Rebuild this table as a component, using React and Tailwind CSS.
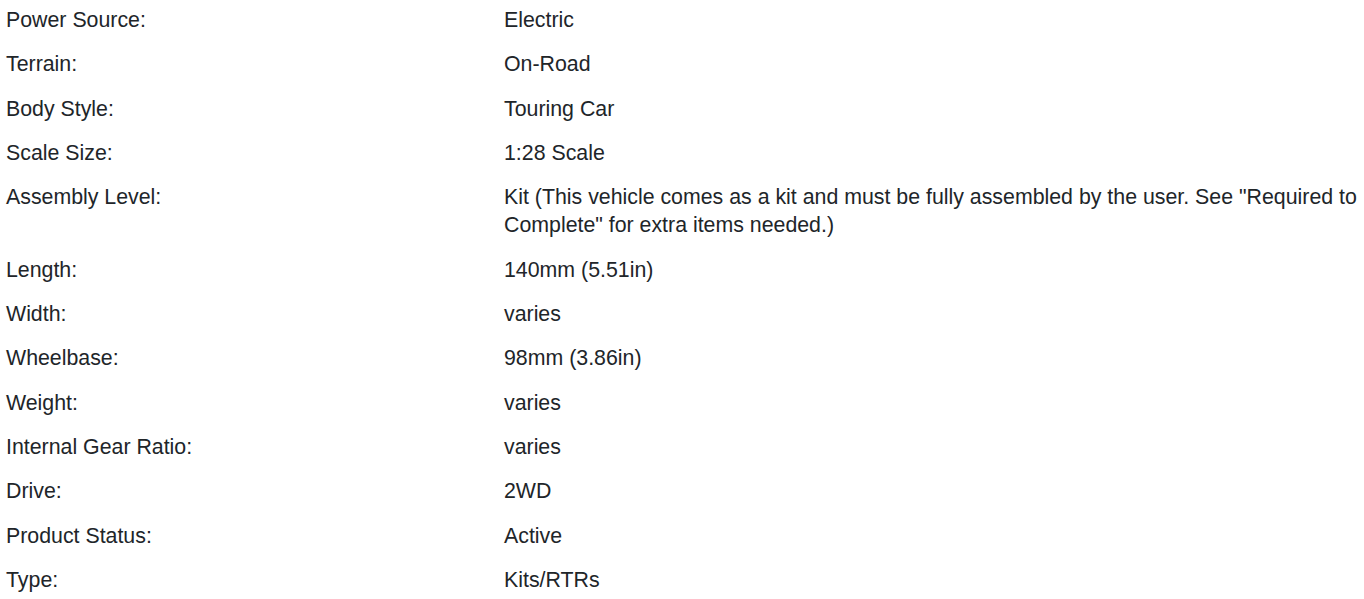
import React from "react";

const rows = [
  ["Power Source:", "Electric"],
  ["Terrain:", "On-Road"],
  ["Body Style:", "Touring Car"],
  ["Scale Size:", "1:28 Scale"],
  [
    "Assembly Level:",
    'Kit (This vehicle comes as a kit and must be fully assembled by the user. See "Required to Complete" for extra items needed.)',
  ],
  ["Length:", "140mm (5.51in)"],
  ["Width:", "varies"],
  ["Wheelbase:", "98mm (3.86in)"],
  ["Weight:", "varies"],
  ["Internal Gear Ratio:", "varies"],
  ["Drive:", "2WD"],
  ["Product Status:", "Active"],
  ["Type:", "Kits/RTRs"],
];

export default function App() {
  return (
    <div
      className="w-[1364px] bg-white text-[#212529] text-[21.33px] leading-[28.3px]"
      style={{ fontFamily: '"Liberation Sans", Arial, sans-serif' }}
    >
      {rows.map(([k, v]) => (
        <div key={k} className="flex">
          <div className="w-[498px] shrink-0 px-1.5 pt-[6px] pb-[10px]">{k}</div>
          <div className="flex-1 pl-1.5 pr-1 pt-[6px] pb-[10px]">{v}</div>
        </div>
      ))}
    </div>
  );
}
